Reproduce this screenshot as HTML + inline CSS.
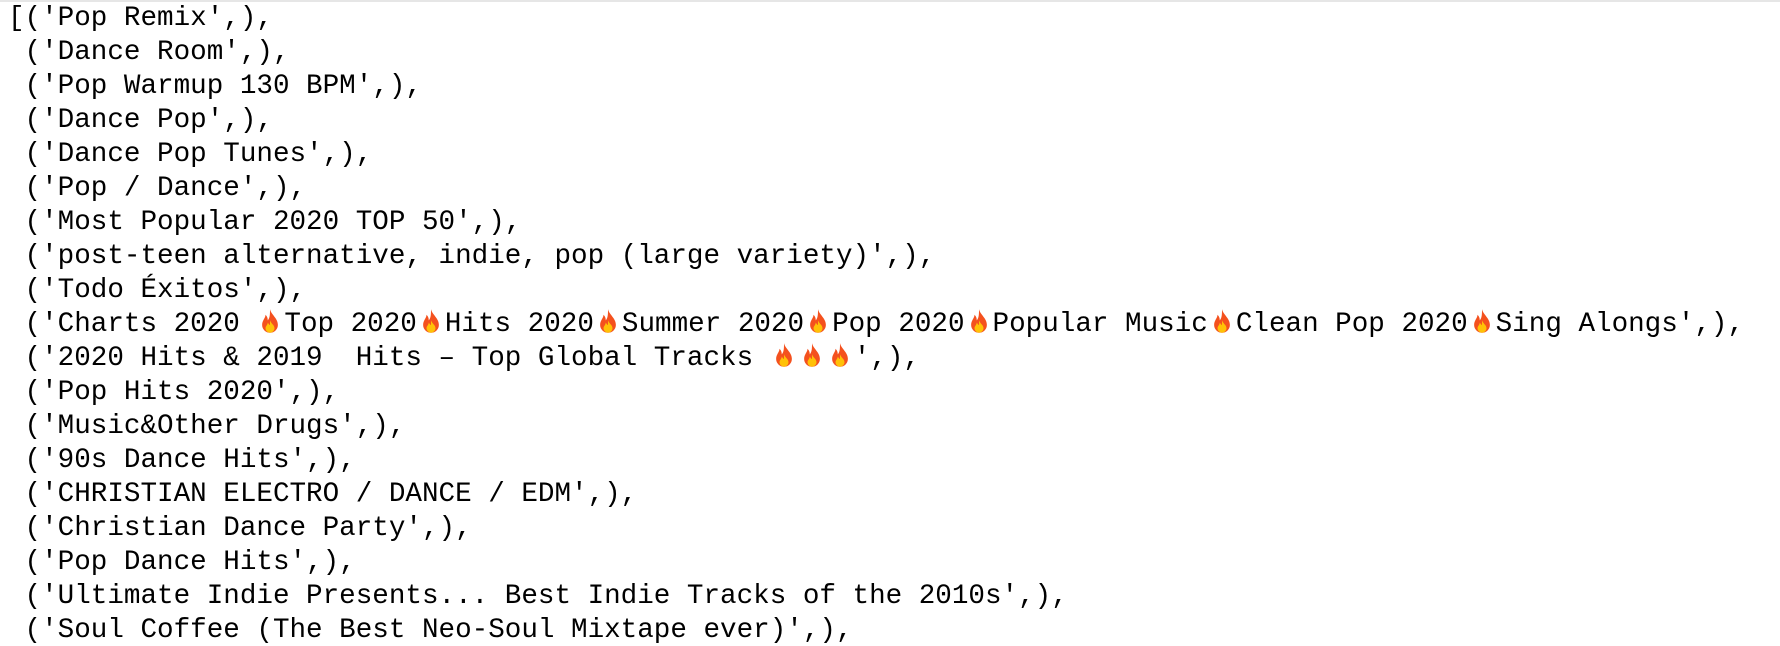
<!DOCTYPE html>
<html><head><meta charset="utf-8"><style>
html,body{margin:0;padding:0;background:#fff;width:1780px;height:646px;overflow:hidden;}
body{border-top:2px solid #e6e6e6;box-sizing:border-box;}
pre{margin:0;padding:0 0 0 8px;font-family:"Liberation Mono",monospace;font-size:27.6px;line-height:34px;color:#000;white-space:pre;position:relative;top:0px;}
.f{display:inline-block;width:26px;height:27px;vertical-align:-4px;margin:0 1px;}
</style></head><body>
<svg width="0" height="0" style="position:absolute"><defs><g id="fl"><path d="M10 1C11 6 17 9 17 15a7 7 0 0 1-14 0c0-4 3-6 3-9 2 2 2 4 2 5 2-2 2-6 2-10z" fill="#f4511e"/><path d="M10 11c1 3 4 4 4 7a4 4 0 0 1-8 0c0-2 2-3 2-5 1 1 1 2 2 2 0-1 0-3 0-4z" fill="#ffc107"/></g></defs></svg>
<pre>[('Pop Remix',),
 ('Dance Room',),
 ('Pop Warmup 130 BPM',),
 ('Dance Pop',),
 ('Dance Pop Tunes',),
 ('Pop / Dance',),
 ('Most Popular 2020 TOP 50',),
 ('post-teen alternative, indie, pop (large variety)',),
 ('Todo Éxitos',),
 ('Charts 2020 <svg class="f" viewBox="0 0 20 24"><use href="#fl"/></svg>Top 2020<svg class="f" viewBox="0 0 20 24"><use href="#fl"/></svg>Hits 2020<svg class="f" viewBox="0 0 20 24"><use href="#fl"/></svg>Summer 2020<svg class="f" viewBox="0 0 20 24"><use href="#fl"/></svg>Pop 2020<svg class="f" viewBox="0 0 20 24"><use href="#fl"/></svg>Popular Music<svg class="f" viewBox="0 0 20 24"><use href="#fl"/></svg>Clean Pop 2020<svg class="f" viewBox="0 0 20 24"><use href="#fl"/></svg>Sing Alongs',),
 ('2020 Hits &amp; 2019  Hits – Top Global Tracks <svg class="f" viewBox="0 0 20 24"><use href="#fl"/></svg><svg class="f" viewBox="0 0 20 24"><use href="#fl"/></svg><svg class="f" viewBox="0 0 20 24"><use href="#fl"/></svg>',),
 ('Pop Hits 2020',),
 ('Music&amp;Other Drugs',),
 ('90s Dance Hits',),
 ('CHRISTIAN ELECTRO / DANCE / EDM',),
 ('Christian Dance Party',),
 ('Pop Dance Hits',),
 ('Ultimate Indie Presents... Best Indie Tracks of the 2010s',),
 ('Soul Coffee (The Best Neo-Soul Mixtape ever)',),</pre>
</body></html>
